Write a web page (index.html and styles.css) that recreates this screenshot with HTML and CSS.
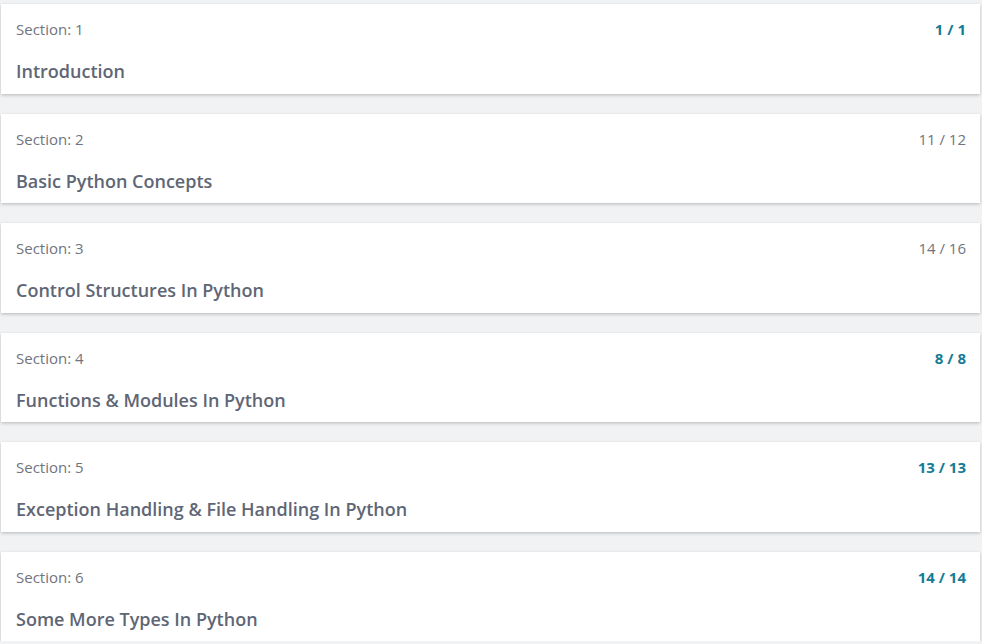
FILE: index.html
```html
<!DOCTYPE html>
<html>
<head>
<meta charset="utf-8">
<link rel="stylesheet" href="styles.css">
</head>
<body>
<div class="list">
  <div class="card">
    <div class="top"><span class="label">Section: 1</span><span class="count done">1 / 1</span></div>
    <div class="title">Introduction</div>
  </div>
  <div class="card">
    <div class="top"><span class="label">Section: 2</span><span class="count">11 / 12</span></div>
    <div class="title">Basic Python Concepts</div>
  </div>
  <div class="card">
    <div class="top"><span class="label">Section: 3</span><span class="count">14 / 16</span></div>
    <div class="title">Control Structures In Python</div>
  </div>
  <div class="card">
    <div class="top"><span class="label">Section: 4</span><span class="count done">8 / 8</span></div>
    <div class="title">Functions &amp; Modules In Python</div>
  </div>
  <div class="card">
    <div class="top"><span class="label">Section: 5</span><span class="count done">13 / 13</span></div>
    <div class="title">Exception Handling &amp; File Handling In Python</div>
  </div>
  <div class="card">
    <div class="top"><span class="label">Section: 6</span><span class="count done">14 / 14</span></div>
    <div class="title">Some More Types In Python</div>
  </div>
</div>
</body>
</html>
```

FILE: styles.css
```css
html, body {
  margin: 0;
  padding: 0;
  background: #f1f2f4;
  font-family: "Open Sans", "Noto Sans", sans-serif;
}
.list {
  display: flex;
  flex-direction: column;
  gap: 20px;
  padding: 4px 2px 0 1px;
}
.card {
  background: #ffffff;
  height: 89.5px;
  box-sizing: border-box;
  padding: 15px 14px 0 15px;
  box-shadow: 0 1px 3px rgba(0, 0, 0, 0.18), 0 2px 4px rgba(0, 0, 0, 0.06);
}
.top {
  display: flex;
  justify-content: space-between;
  align-items: center;
  height: 20px;
}
.label {
  font-size: 15px;
  color: #6f747e;
}
.count {
  font-size: 15px;
  color: #6f747e;
}
.count.done {
  color: #147c95;
  font-weight: 700;
}
.title {
  margin-top: 20px;
  font-size: 18px;
  font-weight: 600;
  line-height: 24px;
  color: #606675;
}
```
